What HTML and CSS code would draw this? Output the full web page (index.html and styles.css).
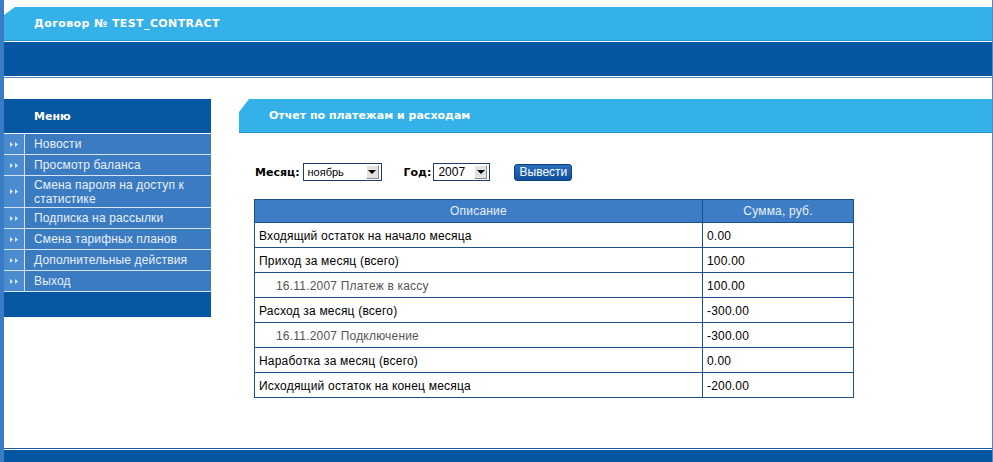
FILE: index.html
```html
<!DOCTYPE html>
<html lang="ru">
<head>
<meta charset="utf-8">
<title>Отчет по платежам и расходам</title>
<link rel="stylesheet" href="styles.css">
</head>
<body>
<div class="page">
  <header class="masthead">
    <div class="topbar"><span class="topbar-title">Договор № TEST_CONTRACT</span></div>
    <div class="subbar"></div>
    <div class="subline"></div>
  </header>
  <div class="layout">
    <aside class="sidebar">
      <div class="menu-head">Меню</div>
      <ul class="menu">
        <li class="menu-item"><span class="menu-ic"><svg width="8" height="5" viewBox="0 0 8 5"><path d="M0 0 L3 2.5 L0 5 Z M5 0 L8 2.5 L5 5 Z" fill="#dce8f8"/></svg></span><span class="menu-text">Новости</span></li>
        <li class="menu-item"><span class="menu-ic"><svg width="8" height="5" viewBox="0 0 8 5"><path d="M0 0 L3 2.5 L0 5 Z M5 0 L8 2.5 L5 5 Z" fill="#dce8f8"/></svg></span><span class="menu-text">Просмотр баланса</span></li>
        <li class="menu-item"><span class="menu-ic"><svg width="8" height="5" viewBox="0 0 8 5"><path d="M0 0 L3 2.5 L0 5 Z M5 0 L8 2.5 L5 5 Z" fill="#dce8f8"/></svg></span><span class="menu-text menu-text-multi">Смена пароля на доступ к статистике</span></li>
        <li class="menu-item"><span class="menu-ic"><svg width="8" height="5" viewBox="0 0 8 5"><path d="M0 0 L3 2.5 L0 5 Z M5 0 L8 2.5 L5 5 Z" fill="#dce8f8"/></svg></span><span class="menu-text">Подписка на рассылки</span></li>
        <li class="menu-item"><span class="menu-ic"><svg width="8" height="5" viewBox="0 0 8 5"><path d="M0 0 L3 2.5 L0 5 Z M5 0 L8 2.5 L5 5 Z" fill="#dce8f8"/></svg></span><span class="menu-text">Смена тарифных планов</span></li>
        <li class="menu-item"><span class="menu-ic"><svg width="8" height="5" viewBox="0 0 8 5"><path d="M0 0 L3 2.5 L0 5 Z M5 0 L8 2.5 L5 5 Z" fill="#dce8f8"/></svg></span><span class="menu-text">Дополнительные действия</span></li>
        <li class="menu-item"><span class="menu-ic"><svg width="8" height="5" viewBox="0 0 8 5"><path d="M0 0 L3 2.5 L0 5 Z M5 0 L8 2.5 L5 5 Z" fill="#dce8f8"/></svg></span><span class="menu-text">Выход</span></li>
      </ul>
      <div class="menu-foot"></div>
    </aside>
    <main class="content">
      <div class="section-head">Отчет по платежам и расходам</div>
      <div class="filters">
        <span class="label">Месяц:</span>
        <span class="select select-month"><span class="select-value">ноябрь</span><span class="select-arrow"><span class="tri"></span></span></span>
        <span class="label label-year">Год:</span>
        <span class="select select-year"><span class="select-value select-value-year">2007</span><span class="select-arrow"><span class="tri"></span></span></span>
        <button class="btn" type="button">Вывести</button>
      </div>
      <table class="report">
        <colgroup><col class="col-desc"><col class="col-sum"></colgroup>
        <thead>
          <tr><th>Описание</th><th>Сумма, руб.</th></tr>
        </thead>
        <tbody>
          <tr><td>Входящий остаток на начало месяца</td><td>0.00</td></tr>
          <tr><td>Приход за месяц (всего)</td><td>100.00</td></tr>
          <tr class="sub"><td>16.11.2007 Платеж в кассу</td><td>100.00</td></tr>
          <tr><td>Расход за месяц (всего)</td><td>-300.00</td></tr>
          <tr class="sub"><td>16.11.2007 Подключение</td><td>-300.00</td></tr>
          <tr><td>Наработка за месяц (всего)</td><td>0.00</td></tr>
          <tr><td>Исходящий остаток на конец месяца</td><td>-200.00</td></tr>
        </tbody>
      </table>
    </main>
  </div>
  <footer class="footer"><div class="footer-bar"></div></footer>
</div>
</body>
</html>
```
FILE: styles.css
```css
html, body {
  margin: 0;
  padding: 0;
  height: 100%;
  background: #ffffff;
  overflow: hidden;
}

.page {
  box-sizing: border-box;
  height: 462px;
  display: flex;
  flex-direction: column;
  border-left: 4px solid #3a7cc6;
  border-right: 1px solid #4a8ad0;
  font-family: "Liberation Sans", Arial, sans-serif;
  font-size: 12px;
}

.masthead {
  padding-top: 7px;
}

.topbar {
  height: 33px;
  background: #34b1e8;
  border-bottom: 1px solid #2a8fce;
  clip-path: polygon(11px 0, 100% 0, 100% 100%, 0 100%, 0 8px);
  display: flex;
  align-items: center;
  padding-left: 30px;
}

.topbar-title {
  font-family: "DejaVu Sans", Verdana, sans-serif;
  font-weight: bold;
  font-size: 11px;
  letter-spacing: 0.4px;
  color: #ffffff;
  padding-bottom: 1px;
}

.subbar {
  margin-top: 1px;
  height: 34px;
  background: #0456a2;
  border-bottom: 1px solid #ffffff;
}

.subline {
  height: 1px;
  background: #5a86c0;
}

.layout {
  flex: 1;
  display: flex;
  align-items: flex-start;
  margin-top: 21px;
}

.sidebar {
  width: 207px;
  flex: none;
  background: #0857a2;
}

.menu-head {
  height: 34px;
  border-bottom: 1px solid #ffffff;
  display: flex;
  align-items: center;
  padding-left: 30px;
  font-family: "DejaVu Sans", Verdana, sans-serif;
  font-weight: bold;
  font-size: 11px;
  color: #ffffff;
}

.menu {
  list-style: none;
  margin: 0;
  padding: 0;
}

.menu-item {
  display: flex;
  border-bottom: 1px solid #d6e4f4;
  background: #3a7bc2;
}

.menu-ic {
  width: 20px;
  flex: none;
  background: #4b8bd0;
  border-right: 1px solid #d6e4f4;
  display: flex;
  align-items: center;
  justify-content: center;
}

.menu-text {
  flex: 1;
  padding-left: 9px;
  padding-top: 1px;
  line-height: 19px;
  height: 19px;
  color: #eaf1fa;
  font-size: 12px;
  letter-spacing: 0.15px;
}

.menu-text-multi {
  height: auto;
  line-height: 14px;
  padding-top: 2px;
  padding-bottom: 1px;
  padding-right: 10px;
}

.menu-foot {
  height: 25px;
  background: #0857a2;
}

.content {
  flex: 1;
  margin-left: 28px;
}

.section-head {
  height: 33px;
  background: #34b1e8;
  border-bottom: 1px solid #2a8fce;
  clip-path: polygon(10px 0, 100% 0, 100% 100%, 0 100%, 0 13px);
  display: flex;
  align-items: center;
  padding-left: 30px;
  font-family: "DejaVu Sans", Verdana, sans-serif;
  font-weight: bold;
  font-size: 11px;
  color: #ffffff;
}

.filters {
  display: flex;
  align-items: center;
  margin-top: 30px;
  padding-left: 16px;
  height: 18px;
}

.label {
  font-family: "DejaVu Sans", Verdana, sans-serif;
  font-weight: bold;
  font-size: 11px;
  color: #000000;
  margin-right: 3px;
}

.label-year {
  margin-left: 22px;
  margin-right: 2px;
}

.select {
  box-sizing: border-box;
  height: 18px;
  border: 1px solid #1d3c72;
  background: #ffffff;
  display: inline-flex;
  align-items: center;
  justify-content: space-between;
  padding: 1px 2px 1px 4px;
}

.select-month { width: 79px; }
.select-year { width: 57px; }

.select-value {
  font-size: 11px;
  color: #000000;
}

.select-value-year {
  font-size: 12px;
}

.select-arrow {
  box-sizing: border-box;
  width: 13px;
  height: 14px;
  background: #e2e2de;
  border: 1px solid;
  border-color: #ffffff #8a8a8a #8a8a8a #ffffff;
  display: flex;
  align-items: center;
  justify-content: center;
}

.tri {
  width: 0;
  height: 0;
  border-left: 4px solid transparent;
  border-right: 4px solid transparent;
  border-top: 4px solid #000000;
}

.btn {
  box-sizing: border-box;
  margin-left: 24px;
  height: 17px;
  width: 58px;
  padding: 0;
  border: 1px solid #0c3f80;
  border-radius: 3px;
  background: linear-gradient(#2a6fbe, #0f4f9c);
  color: #ffffff;
  font-family: "Liberation Sans", Arial, sans-serif;
  font-size: 12px;
  line-height: 14px;
}

.report {
  margin-top: 18px;
  margin-left: 15px;
  width: 600px;
  border-collapse: collapse;
  table-layout: fixed;
}

.col-desc { width: 448px; }

.report th,
.report td {
  border: 1px solid #1b4f8c;
  line-height: 14px;
  font-size: 12px;
  letter-spacing: 0.2px;
  text-align: left;
  padding: 6px 4px 4px;
  color: #000000;
}

.report th {
  background: #3c7dc5;
  color: #e8f0fa;
  font-weight: normal;
  text-align: center;
  padding: 4px 4px;
}

.report .sub td:first-child {
  padding-left: 21px;
  color: #555555;
}

.footer {
  border-top: 1px solid #1d5da6;
  padding-top: 1px;
}

.footer-bar {
  height: 12px;
  background: #0456a2;
}
```
